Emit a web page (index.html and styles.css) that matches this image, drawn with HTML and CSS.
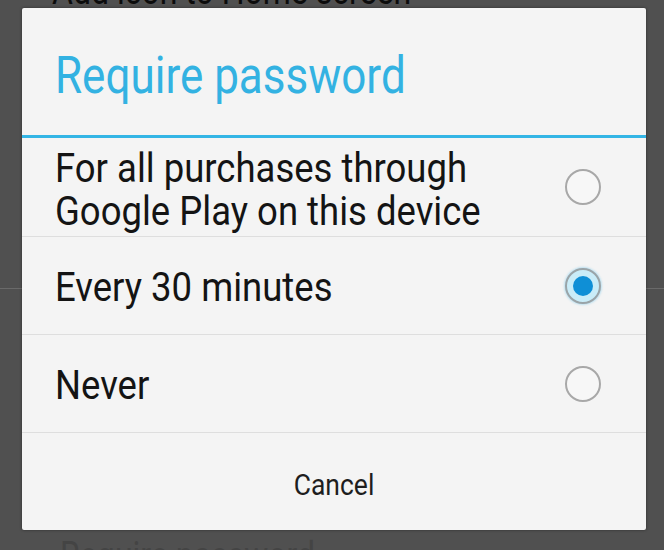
FILE: index.html
```html
<!DOCTYPE html>
<html lang="en">
<head>
<meta charset="utf-8">
<title>Require password</title>
<link rel="stylesheet" href="styles.css">
</head>
<body>
<div class="screen">
  <div class="behind">
    <div class="behind-top"><span class="behind-text">Add icon to Home screen</span></div>
    <div class="behind-rule"></div>
    <div class="behind-bottom"><span class="behind-text">Require password</span></div>
  </div>

  <div class="dialog">
    <div class="dialog-title"><span class="stretch">Require password</span></div>
    <div class="title-rule"></div>
    <ul class="options">
      <li class="option">
        <span class="stretch option-label two-line">For all purchases through<br>Google Play on this device</span>
        <span class="radio"></span>
      </li>
      <li class="option">
        <span class="stretch option-label">Every 30 minutes</span>
        <span class="radio radio-on"><span class="radio-dot"></span></span>
      </li>
      <li class="option">
        <span class="stretch option-label">Never</span>
        <span class="radio"></span>
      </li>
    </ul>
    <div class="actions"><span class="stretch cancel">Cancel</span></div>
  </div>
</div>
</body>
</html>
```

FILE: styles.css
```css
html, body {
  margin: 0;
  padding: 0;
}

body {
  background: #4f4f4f;
  font-family: Roboto, "Noto Sans", sans-serif;
}

.screen {
  position: relative;
  width: 664px;
  height: 550px;
  overflow: hidden;
  background: #505050;
}

.behind {
  display: flex;
  flex-direction: column;
  height: 550px;
}

.behind-top {
  height: 8px;
  padding-left: 52px;
  display: flex;
  align-items: flex-end;
  overflow: hidden;
}

.behind-text {
  display: inline-block;
  font-size: 32px;
  line-height: 32px;
  color: #0c0c0c;
  transform: scaleY(1.2);
  transform-origin: 50% 100%;
  margin-bottom: -2px;
  white-space: nowrap;
}

.behind-rule {
  margin-top: 280px;
  height: 1px;
  background: #6a6a6a;
}

.behind-bottom {
  margin-top: 240px;
  padding-left: 60px;
  overflow: hidden;
  height: 21px;
}

.behind-bottom .behind-text {
  color: #444;
  transform-origin: 50% 0;
  margin-top: 8px;
}

.dialog {
  position: absolute;
  left: 22px;
  top: 8px;
  width: 624px;
  height: 522px;
  background: #f4f4f4;
  border-radius: 2px;
  box-shadow: 0 0 3px rgba(0, 0, 0, 0.45);
  display: flex;
  flex-direction: column;
}

.stretch {
  display: inline-block;
  transform: scaleY(1.12);
  transform-origin: 50% 50%;
}

.dialog-title {
  height: 127px;
  padding-left: 33px;
  padding-top: 6px;
  box-sizing: border-box;
  display: flex;
  align-items: center;
  font-size: 44px;
  line-height: 44px;
  color: #33b2e2;
}

.dialog-title .stretch {
  transform: scaleY(1.18);
}

.title-rule {
  height: 3px;
  background: #33b5e5;
}

.options {
  list-style: none;
  margin: 0;
  padding: 0;
}

.option {
  height: 97px;
  border-bottom: 1px solid #dedede;
  display: flex;
  align-items: center;
  justify-content: space-between;
  padding: 0 45px 0 33px;
}

.option:first-child {
  height: 98px;
}

.option-label {
  font-size: 36.5px;
  line-height: 36px;
  color: #141414;
  padding-top: 3px;
}

.option-label.two-line {
  line-height: 37.5px;
  padding-top: 4px;
}

.radio {
  width: 32px;
  height: 32px;
  border-radius: 50%;
  border: 2px solid #a8a8a8;
  background: #f7f7f7;
  display: flex;
  align-items: center;
  justify-content: center;
  flex-shrink: 0;
}

.radio-on {
  border-color: #9aa4a8;
  background: #c9ecf8;
  box-shadow: 0 0 2px 1px rgba(120, 200, 235, 0.45);
}

.radio-dot {
  width: 20px;
  height: 20px;
  border-radius: 50%;
  background: #0f8fd6;
}

.actions {
  flex: 1;
  display: flex;
  align-items: center;
  justify-content: center;
  padding-top: 6px;
  box-sizing: border-box;
}

.cancel {
  font-size: 26.5px;
  line-height: 26px;
  color: #1e1e1e;
}
```
